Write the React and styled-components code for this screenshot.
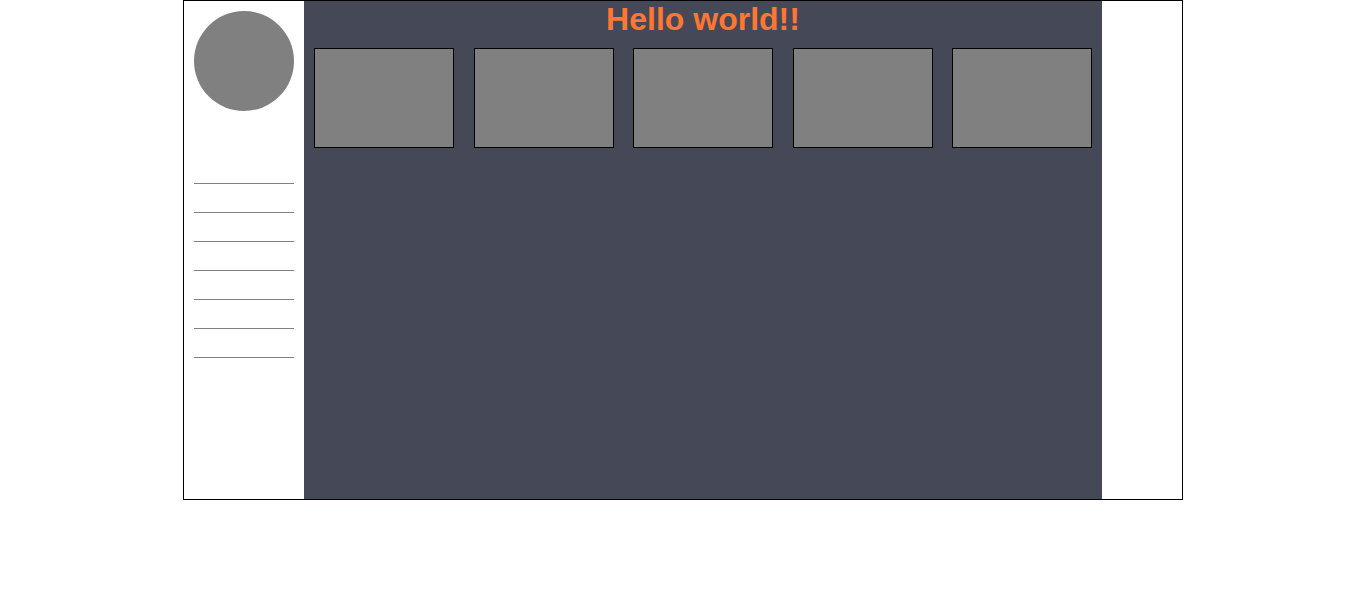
import React from "react";
import styled, { createGlobalStyle } from "styled-components";

const GlobalStyle = createGlobalStyle`
  body {
    margin: 0;
    font-family: "Liberation Sans", Arial, sans-serif;
    background: #fff;
  }
`;

const Frame = styled.div`
  width: 1000px;
  height: 500px;
  margin: 0 auto;
  border: 1px solid #000;
  box-sizing: border-box;
  display: flex;
`;

const Sidebar = styled.aside`
  width: 120px;
  padding: 10px;
  box-sizing: border-box;
  display: flex;
  flex-direction: column;
`;

const Avatar = styled.div`
  width: 100px;
  height: 100px;
  border-radius: 50%;
  background: #808080;
`;

const NavList = styled.ul`
  list-style: none;
  margin: 44px 0 0;
  padding: 0;
`;

const NavItem = styled.li`
  height: 28px;
  border-bottom: 1px solid #808080;
`;

const Main = styled.main`
  width: 798px;
  background: #454857;
  padding: 0 10px;
  box-sizing: border-box;
`;

const Title = styled.h1`
  margin: 0;
  color: #ff7733;
  font-size: 32px;
  font-weight: bold;
  text-align: center;
`;

const CardRow = styled.div`
  display: flex;
  justify-content: space-between;
  margin-top: 10px;
`;

const Card = styled.div`
  width: 140px;
  height: 100px;
  box-sizing: border-box;
  background: #808080;
  border: 1px solid #000;
`;

const Aside = styled.div`
  flex: 1;
`;

export default function App() {
  return (
    <>
      <GlobalStyle />
      <Frame>
        <Sidebar>
          <Avatar />
          <NavList>
            {[0, 1, 2, 3, 4, 5, 6].map((i) => (
              <NavItem key={i} />
            ))}
          </NavList>
        </Sidebar>
        <Main>
          <Title>Hello world!!</Title>
          <CardRow>
            {[0, 1, 2, 3, 4].map((i) => (
              <Card key={i} />
            ))}
          </CardRow>
        </Main>
        <Aside />
      </Frame>
    </>
  );
}
